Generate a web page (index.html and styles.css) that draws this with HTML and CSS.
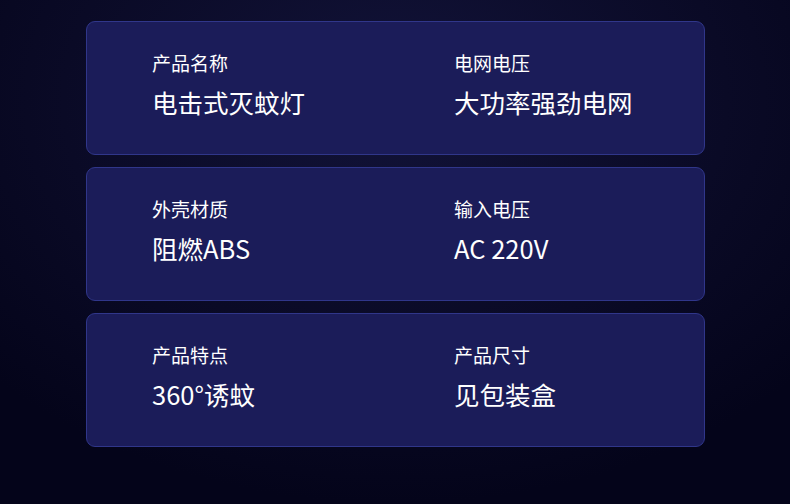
FILE: index.html
```html
<!DOCTYPE html>
<html lang="zh">
<head>
<meta charset="utf-8">
<link rel="stylesheet" href="styles.css">
</head>
<body>
<main class="page">
  <section class="card">
    <div class="item"><div class="label">产品名称</div><div class="value">电击式灭蚊灯</div></div>
    <div class="item"><div class="label">电网电压</div><div class="value">大功率强劲电网</div></div>
  </section>
  <section class="card">
    <div class="item"><div class="label">外壳材质</div><div class="value">阻燃ABS</div></div>
    <div class="item"><div class="label">输入电压</div><div class="value">AC 220V</div></div>
  </section>
  <section class="card">
    <div class="item"><div class="label">产品特点</div><div class="value">360°诱蚊</div></div>
    <div class="item"><div class="label">产品尺寸</div><div class="value">见包装盒</div></div>
  </section>
</main>
</body>
</html>
```
FILE: styles.css
```css
* { box-sizing: border-box; margin: 0; padding: 0; }
html, body { width: 790px; height: 504px; overflow: hidden; }
body {
  background: radial-gradient(ellipse 70% 80% at 50% 20%, #121339 0%, #0a0a26 60%, #04041a 100%);
  font-family: "Noto Sans CJK SC", "Noto Sans", sans-serif;
  color: #ffffff;
}
.page {
  padding: 21px 85px 0 86px;
  display: flex;
  flex-direction: column;
  gap: 12px;
}
.card {
  height: 134px;
  background: #1b1c59;
  border: 1px solid #30368a;
  border-radius: 9px;
  display: grid;
  grid-template-columns: 302px 1fr;
  padding: 26px 0 0 65px;
}
.label {
  font-size: 19px;
  line-height: 30px;
}
.value {
  font-size: 25.5px;
  line-height: 36px;
  margin-top: 6px;
}
```
